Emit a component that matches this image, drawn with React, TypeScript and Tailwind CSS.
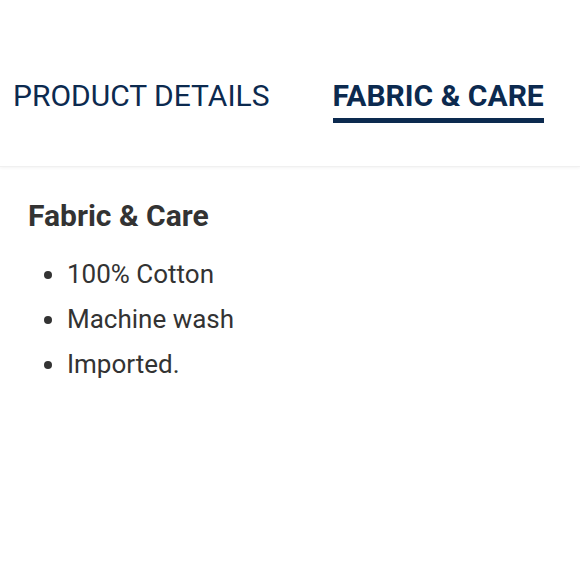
export default function App() {
  return (
    <div className="w-[580px] h-[580px] bg-white font-['Roboto',sans-serif] overflow-hidden">
      {/* Tabs */}
      <div className="flex items-start pt-[78px] h-[167px] border-b border-[#f0f0f0] shadow-[0_1px_3px_rgba(0,0,0,0.05)]">
        <button className="ml-[13px] text-[30px] leading-[36px] text-[#0c2a4f]">
          PRODUCT DETAILS
        </button>
        <button className="ml-[63px] flex flex-col items-stretch">
          <span className="text-[30px] leading-[36px] font-bold text-[#0c2a4f]">FABRIC &amp; CARE</span>
          <span className="mt-[4px] h-[5px] bg-[#0c2a4f]" />
        </button>
      </div>

      {/* Content */}
      <div className="px-[28px] pt-[31px]">
        <h2 className="text-[30px] leading-[36px] font-bold text-[#333333]">Fabric &amp; Care</h2>
        <ul className="mt-[18px] list-disc pl-[39px] text-[26px] leading-[45px] text-[#333333]">
          <li>100% Cotton</li>
          <li>Machine wash</li>
          <li>Imported.</li>
        </ul>
      </div>
    </div>
  );
}
